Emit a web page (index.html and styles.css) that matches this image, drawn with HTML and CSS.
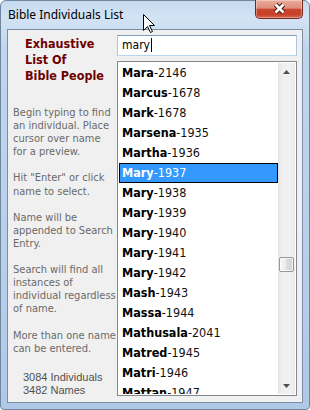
FILE: index.html
```html
<!DOCTYPE html>
<html lang="en">
<head>
    <meta charset="UTF-8">
    <title>Bible Individuals List</title>
    <link rel="stylesheet" href="styles.css">
</head>
<body>
    <div class="window">
        <div class="titlebar">
            <span class="title">Bible Individuals List</span>
            <div class="close-btn">
                <svg width="48" height="19" viewBox="0 0 48 19">
                    <path d="M20.5 5.5 L28.5 13.5 M28.5 5.5 L20.5 13.5" stroke="#4b1d14" stroke-width="4.6" fill="none"/>
                    <path d="M20.5 5.5 L28.5 13.5 M28.5 5.5 L20.5 13.5" stroke="#ffffff" stroke-width="2.6" fill="none"/>
                </svg>
            </div>
        </div>

        <div class="client">
            <!-- Left help panel -->
            <div class="side">
                <h1 class="heading">Exhaustive<br>List Of<br>Bible People</h1>
                <p class="help">Begin typing to find<br>an individual. Place<br>cursor over name<br>for a preview.</p>
                <p class="help">Hit "Enter" or click<br>name to select.</p>
                <p class="help">Name will be<br>appended to Search<br>Entry.</p>
                <p class="help">Search will find all<br>instances of<br>individual regardless<br>of name.</p>
                <p class="help">More than one name<br>can be entered.</p>
                <div class="counts">
                    <div>3084 Individuals</div>
                    <div>3482 Names</div>
                </div>
            </div>

            <!-- Search box and results -->
            <div class="main">
                <div class="search">mary<span class="caret"></span></div>
                <div class="listbox">
                    <ul class="names">
                        <li><b>Mara</b>-2146</li>
                        <li><b>Marcus</b>-1678</li>
                        <li><b>Mark</b>-1678</li>
                        <li><b>Marsena</b>-1935</li>
                        <li><b>Martha</b>-1936</li>
                        <li class="selected"><b>Mary</b>-1937</li>
                        <li><b>Mary</b>-1938</li>
                        <li><b>Mary</b>-1939</li>
                        <li><b>Mary</b>-1940</li>
                        <li><b>Mary</b>-1941</li>
                        <li><b>Mary</b>-1942</li>
                        <li><b>Mash</b>-1943</li>
                        <li><b>Massa</b>-1944</li>
                        <li><b>Mathusala</b>-2041</li>
                        <li><b>Matred</b>-1945</li>
                        <li><b>Matri</b>-1946</li>
                        <li><b>Mattan</b>-1947</li>
                    </ul>
                    <div class="scrollbar">
                        <div class="arrow">
                            <svg width="7" height="4" viewBox="0 0 7 4"><polygon points="3.5,0 7,4 0,4" fill="#505050"/></svg>
                        </div>
                        <div class="track"></div>
                        <div class="arrow">
                            <svg width="7" height="4" viewBox="0 0 7 4"><polygon points="0,0 7,0 3.5,4" fill="#505050"/></svg>
                        </div>
                        <div class="thumb"></div>
                    </div>
                </div>
            </div>
        </div>

        <svg class="pointer" width="13" height="20" viewBox="0 0 13 20">
            <path d="M0.5 0.5 L0.5 16.5 L4.5 12.5 L7.5 18.5 L9.5 17.5 L6.5 11.5 L11.5 11.5 Z" fill="#ffffff" stroke="#000000" stroke-width="1"/>
        </svg>
    </div>
</body>
</html>
```

FILE: styles.css
```css
/* Page */
html, body {
    margin: 0;
    padding: 0;
}

body {
    width: 310px;
    height: 410px;
    overflow: hidden;
    font-family: "DejaVu Sans Condensed", "DejaVu Sans", sans-serif;
    font-stretch: condensed;
}

/* Window frame */
.window {
    position: relative;
    box-sizing: border-box;
    height: 410px;
    display: flex;
    flex-direction: column;
    padding: 0 6px 6px 6px;
    border: 1px solid #70869f;
    border-radius: 6px 6px 4px 4px;
    background: linear-gradient(180deg, #c6daef 0%, #d3e3f4 4%, #c0d6ee 12%, #b9d0ea 60%, #aec8e6 100%);
}

.titlebar {
    height: 28px;
    display: flex;
    align-items: flex-start;
}

.title {
    padding: 6px 0 0 1px;
    font-family: "Noto Sans", sans-serif;
    font-size: 12px;
    line-height: 16px;
    color: #000;
}

.close-btn {
    margin-left: auto;
    margin-top: -1px;
    width: 48px;
    height: 19px;
    box-sizing: border-box;
    border: 1px solid #6a2a1f;
    border-top: none;
    border-radius: 0 0 5px 5px;
    background: linear-gradient(180deg, #e9ab9c 0%, #df8f7b 45%, #c9462e 52%, #c84129 80%, #d6694f 100%);
    box-shadow: inset 0 0 0 1px rgba(255, 255, 255, 0.35);
}

.close-btn svg {
    display: block;
    margin: -1px 0 0 -1px;
}

.pointer {
    position: absolute;
    left: 142px;
    top: 13px;
}

/* Client area */
.client {
    height: 374px;
    box-sizing: border-box;
    display: flex;
    padding: 5px 5px 6px 0;
    border: 1px solid #7b8ea5;
    background: #f0f0f0;
}

.side {
    width: 109px;
    flex-shrink: 0;
    padding-left: 5px;
    box-sizing: border-box;
    margin-top: -5px;
    white-space: nowrap;
}

.heading {
    margin: 6px 0 0 12px;
    font-size: 12.5px;
    line-height: 16px;
    font-weight: bold;
    color: #6e0000;
}

.help {
    margin: 13.1px 0 0 0;
    font-size: 11px;
    line-height: 13.1px;
    color: #6a6a6a;
}

.heading + .help {
    margin-top: 22px;
}

.counts {
    margin: 16px 0 0 10px;
    font-family: "Liberation Sans", sans-serif;
    font-size: 11px;
    line-height: 13px;
    color: #505050;
}

/* Search + list */
.main {
    width: 180px;
    flex-shrink: 0;
    position: relative;
    z-index: 1;
}

.search {
    height: 21px;
    box-sizing: border-box;
    padding: 2px 0 0 4px;
    border: 1px solid;
    border-color: #7d9fc0 #a9c9e2 #b7d8ec #a9c9e2;
    background: #fff;
    font-size: 12px;
    line-height: 15px;
    color: #000;
}

.caret {
    display: inline-block;
    width: 1px;
    height: 14px;
    margin-left: 1px;
    vertical-align: -3px;
    background: #000;
}

.listbox {
    margin-top: 5px;
    height: 335px;
    box-sizing: border-box;
    display: flex;
    padding: 1px;
    border: 1px solid #828790;
    background: #fff;
}

.names {
    flex: 1;
    margin: 0;
    padding: 0;
    list-style: none;
    overflow: hidden;
}

.names li {
    height: 20px;
    box-sizing: border-box;
    padding-left: 3px;
    font-size: 12.5px;
    line-height: 20px;
    color: #111;
    white-space: nowrap;
}

.names b {
    color: #000;
}

.names li.selected {
    padding-left: 2px;
    line-height: 18px;
    border: 1px solid #000;
    background: #3399ff;
    color: #fff;
}

.names li.selected b {
    color: #fff;
}

/* Scrollbar */
.scrollbar {
    position: relative;
    width: 17px;
    display: flex;
    flex-direction: column;
    background: linear-gradient(90deg, #e4e4e4 0%, #efefef 25%, #f1f1f1 75%, #e9e9e9 100%);
}

.arrow {
    height: 17px;
    display: flex;
    align-items: center;
    justify-content: center;
}

.arrow svg {
    display: block;
}

.track {
    flex: 1;
}

.thumb {
    position: absolute;
    left: 1px;
    top: 194px;
    width: 15px;
    height: 15px;
    box-sizing: border-box;
    border: 1px solid #979797;
    border-radius: 2px;
    background: linear-gradient(90deg, #f4f4f4 0%, #ececec 50%, #dcdcdc 50%, #d3d3d3 100%);
    box-shadow: inset 0 0 0 1px rgba(255, 255, 255, 0.7);
}
```
